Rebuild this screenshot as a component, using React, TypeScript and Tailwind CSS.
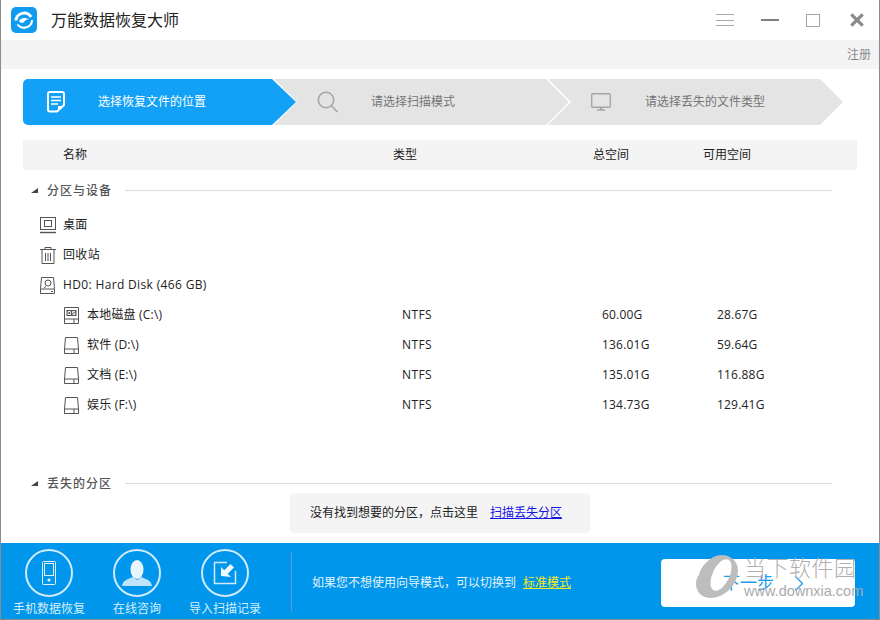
import React from "react";

const font = { fontFamily: '"Open Sans","Noto Sans CJK SC",sans-serif' };

function Logo() {
  return (
    <div className="w-[26px] h-[26px] rounded-[5px] bg-[#0f9cf0] flex items-center justify-center">
      <svg width="20" height="20" viewBox="0 0 20 20" fill="none">
        <path d="M2 10.500a8 7.500 0 0 1 15-3.500" stroke="#fff" strokeWidth="3" />
        <path d="M18 10a8 7.500 0 0 1-14.500 4.500" stroke="#fff" strokeWidth="2" />
        <path d="M5 11c1.500-3 6-4 10-1.500-3-.5-4 1-5 2.500-1.500 1.500-4 1-5-1z" fill="#fff" />
      </svg>
    </div>
  );
}

function WindowControls() {
  return (
    <div className="flex items-center ml-auto">
      <svg width="18" height="14" viewBox="0 0 18 14" className="mr-[27px]" fill="none" stroke="#a9a9a9">
        <path d="M0 1.500h18M0 7.500h18M0 12.500h18" />
      </svg>
      <div className="w-[18px] h-[2px] bg-[#7f7f7f] mr-[27px]" />
      <div className="w-[14px] h-[13px] border border-[#a5a5a5] mr-[30px]" />
      <svg width="14" height="14" viewBox="0 0 16 16" className="mr-[15px]" fill="none" stroke="#8a8a8a" strokeWidth="3.800">
        <path d="M1.500 1.500l13 13M14.500 1.500l-13 13" />
      </svg>
    </div>
  );
}

function Steps() {
  return (
    <div className="flex h-[46px] ml-[22px] mt-[10px]">
      <div className="w-[273px] h-full bg-[#12a1f6] rounded-l-[5px] flex items-center text-white text-[12px] relative z-20 [clip-path:polygon(0_0,249px_0,100%_50%,249px_100%,0_100%)]">
        <svg width="18" height="22" viewBox="0 0 18 22" className="ml-[24px] mr-[33px]" fill="none" stroke="#fff" strokeWidth="2">
          <path d="M10 20.500H3a2 2 0 0 1-2-2V3a2 2 0 0 1 2-2h12a2 2 0 0 1 2 2v11l-7 6.500z" />
          <path d="M4 6h10M4 9.500h10M4 13h7" strokeWidth="1.600" />
          <path d="M11 20v-5h5z" fill="#fff" stroke="none" />
        </svg>
        <span>选择恢复文件的位置</span>
      </div>
      <div className="w-[295px] h-full -ml-[22px] bg-[#e4e4e4] flex items-center text-[12px] text-[#757575] relative z-10 [clip-path:polygon(0_0,272px_0,100%_50%,272px_100%,0_100%,23px_50%)]">
        <svg width="22" height="22" viewBox="0 0 22 22" className="ml-[43px] mr-[32px]" fill="none" stroke="#a6a6a6" strokeWidth="1.600">
          <circle cx="9" cy="9" r="7.700" />
          <path d="M14.500 15l6 6" />
        </svg>
        <span>请选择扫描模式</span>
      </div>
      <div className="w-[295px] h-full -ml-[21px] bg-[#e4e4e4] flex items-center text-[12px] text-[#757575] [clip-path:polygon(0_0,272px_0,100%_50%,272px_100%,0_100%,23px_50%)]">
        <svg width="20" height="18" viewBox="0 0 20 18" className="ml-[43px] mr-[34px]" fill="none" stroke="#a6a6a6" strokeWidth="1.400">
          <rect x="0.700" y="0.700" width="18.600" height="13.600" rx="1" />
          <path d="M6 17h8" strokeWidth="1.600" />
          <path d="M9 15h2l.5 2h-3z" fill="#a6a6a6" stroke="none" />
        </svg>
        <span>请选择丢失的文件类型</span>
      </div>
    </div>
  );
}

function SectionTitle({ title }: { title: string }) {
  return (
    <div className="flex items-center h-[20px] ml-[22px] w-[809px]">
      <svg width="7" height="5" viewBox="0 0 7 5" className="ml-[8px] mr-[9px]">
        <path d="M0 5h7V0z" fill="#444" />
      </svg>
      <span className="text-[12px] font-medium text-[#555] tracking-[1px] relative top-px">{title}</span>
      <div className="flex-1 h-px bg-[#dcdcdc] ml-[13px]" />
    </div>
  );
}

const strokeProps = { fill: "none", stroke: "#555", strokeWidth: 1 };

function DesktopIcon() {
  return (
    <svg width="16" height="17" viewBox="0 0 16 17" {...strokeProps}>
      <rect x="0.500" y="0.500" width="15" height="12" />
      <rect x="4.500" y="3.500" width="7" height="6" />
      <path d="M0 15.500h16" strokeWidth="1.400" />
    </svg>
  );
}

function TrashIcon() {
  return (
    <svg width="16" height="18" viewBox="0 0 16 18" {...strokeProps}>
      <path d="M0 3.500h16M5 3V1.500h6V3" />
      <path d="M2 4v13.500h12V4" />
      <path d="M5.500 7v8M8 7v8M10.500 7v8" />
    </svg>
  );
}

function HddIcon() {
  return (
    <svg width="15" height="17" viewBox="0 0 15 17" {...strokeProps}>
      <path d="M1.500 .500h12l1 11v5H.500v-5z" />
      <path d="M.500 12h14" />
      <circle cx="8" cy="6" r="3" />
      <path d="M6 9.500l-2 1.500" />
      <path d="M11 14.500h2" />
    </svg>
  );
}

function DriveIcon({ os }: { os?: boolean }) {
  return (
    <svg width="15" height="17" viewBox="0 0 15 17" {...strokeProps}>
      <path d={os ? "M.500 .500h14v16H.500z" : "M1.500 .500h12l1 11.500v4.500H.500V12z"} />
      <path d="M.500 12h14M10 12v4.500" />
      {os && <rect x="2.500" y="3" width="10" height="6" fill="#555" stroke="none" />}
      {os && <path d="M4 4.500h2.500v3H4zM11 4.500H8.500V6H11v1.500H8.500" stroke="#fff" strokeWidth="0.900" />}
    </svg>
  );
}

function TopRow({ icon, label }: { icon: React.ReactNode; label: string }) {
  return (
    <div className="flex items-center h-[30px] pl-[39px] text-[12px] text-[#222] tracking-[0.35px]">
      <div className="w-[23px] flex">{icon}</div>
      <span>{label}</span>
    </div>
  );
}

function DriveRow({ os, label, fs, total, free }: { os?: boolean; label: string; fs: string; total: string; free: string }) {
  return (
    <div className="flex items-center h-[30px] pl-[63px] text-[12px] text-[#222] tracking-[0.2px]">
      <div className="w-[23px] flex">
        <DriveIcon os={os} />
      </div>
      <span className="w-[315px]">{label}</span>
      <span className="w-[200px] tracking-[0.4px]">{fs}</span>
      <span className="w-[115px]">{total}</span>
      <span>{free}</span>
    </div>
  );
}

function FooterItem({ label, children }: { label: string; children: React.ReactNode }) {
  return (
    <div className="w-[88px] flex flex-col items-center">
      <div className="w-[48px] h-[48px] rounded-full border-2 border-[#cfeafb] flex items-center justify-center">{children}</div>
      <span className="text-[12px] text-[#d6eefc] mt-[3px] leading-[18px] whitespace-nowrap">{label}</span>
    </div>
  );
}

function Watermark() {
  return (
    <div className="absolute left-[694px] top-[554px] w-[162px] h-[50px] pointer-events-none">
      <svg width="44" height="46" viewBox="0 0 44 46" className="absolute left-0 top-0">
        <path
          fillRule="evenodd"
          d="M27 1C36 1 43 8 43 16 43 30 30 44 16 44 7 44 1 38 1 30 1 26 2 23 4 21 6 12 16 1 27 1zM33.200 5.600A8.500 17 25 1 0 18.800 36.400A8.500 17 25 1 0 33.200 5.600z"
          fill="#bdbdbd"
        />
      </svg>
      <span className="absolute left-[49px] top-[-2px] text-[22px] leading-[28px] tracking-[0.5px] text-[#b0b0b0] font-light whitespace-nowrap" style={{ fontFamily: '"Noto Sans CJK SC",sans-serif' }}>
        当下软件园
      </span>
      <span className="absolute left-[49px] top-[28px] text-[14.500px] leading-[18px] text-[#aaa] whitespace-nowrap" style={{ fontFamily: '"Liberation Sans",sans-serif' }}>
        www.downxia.com
      </span>
    </div>
  );
}

export default function App() {
  return (
    <div style={font} className="w-[880px] h-[620px] bg-white border-x border-b border-[#8c8c8c] flex flex-col relative overflow-hidden">
      <header className="h-[40px] flex items-center pl-[10px] shrink-0">
        <Logo />
        <span className="ml-[14px] text-[16px] text-[#222]">万能数据恢复大师</span>
        <WindowControls />
      </header>
      <div className="h-[29px] bg-[#f4f4f4] flex items-center justify-end pr-[8px] text-[12px] text-[#888] shrink-0">注册</div>
      <Steps />
      <div className="mt-[15px] ml-[22px] w-[834px] h-[30px] bg-[#f4f4f4] flex items-center text-[12px] text-[#222] shrink-0">
        <span className="ml-[40px] w-[330px]">名称</span>
        <span className="w-[200px]">类型</span>
        <span className="w-[110px]">总空间</span>
        <span>可用空间</span>
      </div>
      <div className="mt-[10px]">
        <SectionTitle title="分区与设备" />
      </div>
      <div className="mt-[10px]">
        <TopRow icon={<DesktopIcon />} label="桌面" />
        <TopRow icon={<TrashIcon />} label="回收站" />
        <TopRow icon={<HddIcon />} label="HD0: Hard Disk (466 GB)" />
        <DriveRow os label="本地磁盘 (C:\)" fs="NTFS" total="60.00G" free="28.67G" />
        <DriveRow label="软件 (D:\)" fs="NTFS" total="136.01G" free="59.64G" />
        <DriveRow label="文档 (E:\)" fs="NTFS" total="135.01G" free="116.88G" />
        <DriveRow label="娱乐 (F:\)" fs="NTFS" total="134.73G" free="129.41G" />
      </div>
      <div className="mt-[53px]">
        <SectionTitle title="丢失的分区" />
      </div>
      <div className="ml-[289px] w-[300px] h-[40px] rounded-[4px] bg-[#f4f4f4] flex items-center pl-[20px] text-[12px] text-[#222] shrink-0">
        <span>没有找到想要的分区，点击这里</span>
        <a className="ml-[12px] text-[#1515e8] underline">扫描丢失分区</a>
      </div>
      <footer className="mt-auto h-[76px] bg-[#0096eb] flex shrink-0">
        <div className="flex pt-[6px] pl-[4px]">
          <FooterItem label="手机数据恢复">
            <svg width="14" height="24" viewBox="0 0 14 24" fill="none" stroke="#e3f3fd" strokeWidth="1">
              <rect x="0.500" y="0.500" width="13" height="23" rx="1" />
              <rect x="2.500" y="2.500" width="9" height="12" />
              <circle cx="7" cy="19" r="1.600" fill="#e3f3fd" stroke="none" />
            </svg>
          </FooterItem>
          <FooterItem label="在线咨询">
            <svg width="30" height="26" viewBox="0 0 30 26">
              <ellipse cx="15" cy="9.500" rx="6.500" ry="9.500" fill="#e8f5fd" />
              <path d="M0 26c1-6 6-7 11-9l4 3 4-3c5 2 10 3 11 9z" fill="#bfe3fa" />
            </svg>
          </FooterItem>
          <FooterItem label="导入扫描记录">
            <svg width="24" height="24" viewBox="0 0 24 24" fill="none" stroke="#cfeafb">
              <path d="M14 1.500H1.500v21h21V10" strokeWidth="1.500" />
              <path d="M8 15V6l3.200 3.200L17.500 3 21 6.500l-6.300 6.300L18 16z" fill="#f0f9fe" stroke="none" />
            </svg>
          </FooterItem>
        </div>
        <div className="w-px h-[60px] mt-[9px] ml-[22px] bg-[#5a9fd0]" />
        <div className="ml-[20px] mt-[31px] text-[12px] leading-[18px] text-[#e3f3fd]">
          <span>如果您不想使用向导模式，可以切换到</span>
          <a className="ml-[7px] text-[#f6e81c] underline">标准模式</a>
        </div>
        <button className="absolute left-[660px] top-[559px] w-[194px] h-[48px] rounded-[4px] bg-white flex items-center text-[17px] text-[#1c9cf0]">
          <span className="ml-[62px]">下一步</span>
          <svg width="8" height="15" viewBox="0 0 8 15" className="ml-[21px]" fill="none" stroke="#1c9cf0" strokeWidth="1.300">
            <path d="M.500 .500l7 7-7 7" />
          </svg>
        </button>
      </footer>
      <Watermark />
    </div>
  );
}
